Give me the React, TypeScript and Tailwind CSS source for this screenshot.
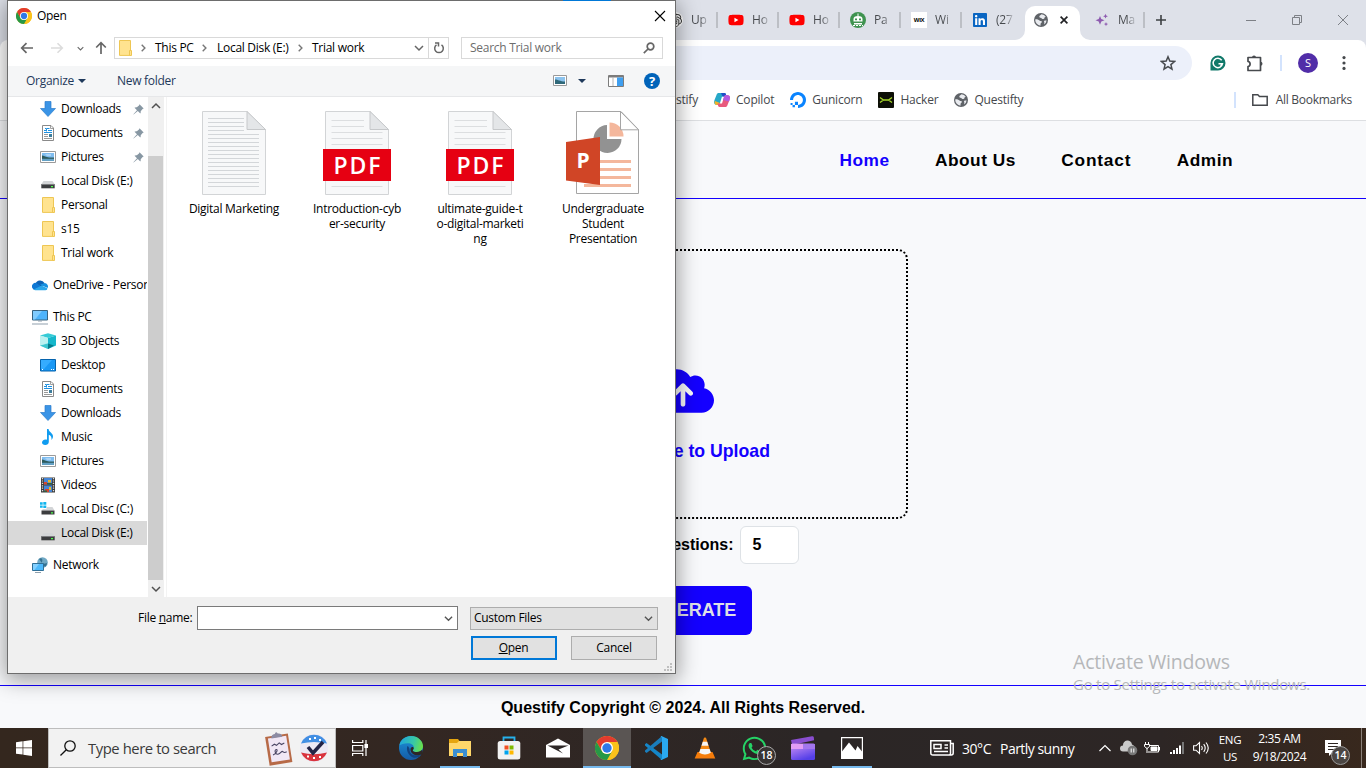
import React from "react";
import { FaWhatsapp, FaLinkedin, FaYoutube } from "react-icons/fa";
import { FaCloudArrowUp } from "react-icons/fa6";
import { SiOpenai, SiDigitalocean } from "react-icons/si";

type IconProps = { className?: string };

const Chrome = ({ className = "" }: IconProps) => (
  <svg viewBox="0 0 48 48" className={className}>
    <circle cx="24" cy="24" r="24" fill="#fbc21a" />
    <path d="M24 12H44.8A24 24 0 0 1 24 48L34.4 30Z" fill="#fbc21a" />
    <path d="M3.2 12 13.6 30 24 24V12H44.8A24 24 0 0 0 3.2 12Z" fill="#e33b2e" />
    <path d="M3.2 12 13.6 30A12 12 0 0 0 34.4 30L24 48A24 24 0 0 1 3.2 12Z" fill="#279847" />
    <circle cx="24" cy="24" r="12" fill="#fff" />
    <circle cx="24" cy="24" r="9.4" fill="#2f78e8" />
  </svg>
);

const Globe = ({ className = "" }: IconProps) => (
  <svg viewBox="0 0 16 16" className={className}>
    <circle cx="8" cy="8" r="8" fill="#5f6368" />
    <path
      d="M1.6 7.2C3 7 5 7.400 6.300 8.600 7.100 9.500 8.800 8.800 9.100 10.100 9.300 11.300 7.500 11.200 7.500 12.600L7.400 14.500A6.600 6.600 0 0 1 1.400 8ZM8.600 1.500C7.400 2.700 5.800 3 6.100 4.600 6.400 5.900 8 5.300 8.900 6.300 9.800 7.300 11.600 7 12 5.600 12.200 4.600 13.200 4.700 13.600 4.700A6.500 6.500 0 0 0 8.600 1.500ZM14.400 8.600C13.400 8.500 12.400 8.200 11.600 9.100 10.900 10 12.200 10.500 11.800 11.500L11.400 13.200A6.500 6.500 0 0 0 14.400 8.600Z"
      fill="#e9ebef"
    />
  </svg>
);

const FolderIcon = () => (
  <svg viewBox="0 0 16 16" className="h-4 w-4">
    <path d="M2.500.5h11v14.900h-11z" fill="#ffe38f" stroke="#eec653" />
    <path d="M12.500 10.500h2v5h-2z" fill="#ffe38f" stroke="#eec653" />
  </svg>
);

const DownloadIcon = () => (
  <svg viewBox="0 0 16 16" className="h-4 w-4">
    <path d="M5 .5h6v7h4.500L8 15.500.5 7.500H5z" fill="#3a94e6" stroke="#2b7ccb" strokeWidth=".7" />
  </svg>
);

const DocIcon = () => (
  <svg viewBox="0 0 16 16" className="h-4 w-4">
    <path d="M2.500.5h8.500l2.500 2.500v12.500h-11z" fill="#fff" stroke="#8a8a8a" />
    <path d="M10.500.5v3h3" fill="none" stroke="#8a8a8a" strokeWidth=".8" />
    <path d="M4 5.500h2M7 3.500h2.500M8 5.500h4M4 7.500h8" stroke="#1e90e0" />
    <path d="M5 3.500h1.500v3" stroke="#1e90e0" fill="none" />
    <path d="M4 9.500h4M4 11.500h4M4 13.500h8" stroke="#999" />
    <path d="M9 9h3v3H9z" fill="#3d7d9c" />
  </svg>
);

const PictureIcon = () => (
  <svg viewBox="0 0 16 16" className="h-4 w-4">
    <path d="M.5 2.500h15v11H.5z" fill="#fff" stroke="#9a9a9a" />
    <path d="M2 4h12v8H2z" fill="#7fbdf0" />
    <path d="M2 6.500c2 0 3 1.200 6 1.700s4 .3 6 .3V10H2z" fill="#2d5b5d" />
    <path d="M2 9.800h12V12H2z" fill="#63a0c4" />
    <path d="M5 5.500h6v1H7z" fill="#d6ecfb" />
  </svg>
);

const DriveIcon = () => (
  <svg viewBox="0 0 16 16" className="h-4 w-4">
    <path d="M3.500 8h9l2 3h-13z" fill="#d3d5d7" />
    <path d="M1.300 11h13.400v4.300H1.300z" fill="#3c3d3f" />
    <path d="M1.300 11h13.400v.8H1.300z" fill="#8d8f91" />
    <path d="M11 13h2v1.200h-2z" fill="#4dff4d" />
  </svg>
);

const SystemDriveIcon = () => (
  <svg viewBox="0 0 16 16" className="h-4 w-4">
    <path d="M0 1.300h2.700v2.400H0zM3.300 1h3v2.700h-3zM0 4.400h2.700v2.400H0zM3.300 4.400h3V7h-3z" fill="#12b5ee" />
    <path d="M6.500 6h6l2 3.600h-13L3 8.100h3.500z" fill="#d3d5d7" />
    <path d="M1.500 9.500h13v4H1.500z" fill="#3c3d3f" />
    <path d="M11 11.300h2v1.200h-2z" fill="#4dff4d" />
  </svg>
);

const OneDriveIcon = () => (
  <svg viewBox="0 0 16 16" className="h-4 w-4">
    <path d="M3.400 6.700A5 5 0 0 1 12.500 6l-3 4z" fill="#0d62b5" />
    <path d="M.3 11A3.500 3.500 0 0 1 5 6.300l4 3.500-7 3.200z" fill="#0f78d4" />
    <path d="M8 7.800 12.700 6A3.600 3.600 0 0 1 15.700 11z" fill="#1690e0" />
    <path d="M1.800 12.600 9.500 8.500l5.800 2.800c.4 1-.7 2-1.800 2H3.300c-.8 0-1.200-.4-1.500-.7z" fill="#2aa6ea" />
  </svg>
);

const PcIcon = () => (
  <svg viewBox="0 0 16 16" className="h-4 w-4">
    <path d="M.5 1.500h15v9.500H.5z" fill="#4db3fb" stroke="#37627f" />
    <path d="M1 2h9l-7 8.500H1z" fill="#80ccff" />
    <path d="M6 11.600h4v1H6zM0 14.500h16v1H0z" fill="#8fa0ad" />
  </svg>
);

const ObjectsIcon = () => (
  <svg viewBox="0 0 16 16" className="h-4 w-4">
    <path d="M0 2.500 8 .3l8 2.200-8 2.500z" fill="#35cbd6" />
    <path d="M0 2.500 8 5v11L0 12.500z" fill="#8fe8ea" />
    <path d="M16 2.500 8 5v11l8-3.500z" fill="#16b7cb" />
    <path d="M8 10.500 14 12.500 8 16z" fill="#077b8a" />
    <path d="m0 12.500 8-2V16z" fill="#3cc6cf" />
    <path d="M0 2.500 8 5v5l-8 2.500z" fill="#c6f3f1" opacity=".8" />
  </svg>
);

const DesktopIcon = () => (
  <svg viewBox="0 0 16 16" className="h-4 w-4">
    <path d="M.5 2.500h15v11.500H.5z" fill="#1998f5" stroke="#0563ad" />
    <path d="M1 3h11l-8 9H1z" fill="#35acff" />
    <path d="M2 12.500h1M11 12.500h1M13 12.500h1" stroke="#fff" />
  </svg>
);

const MusicIcon = () => (
  <svg viewBox="0 0 16 16" className="h-4 w-4">
    <path d="M7 0h1.600c0 3 4.600 4 4.400 7.500 0 1.500-.8 2.700-1.600 3.400.5-2.300-.4-4.300-2.600-5.200V13c0 1.800-1.700 3-3.600 3S2 14.900 2 13.500 3.400 10.500 5.500 10.500c.6 0 1.100.1 1.500.3z" fill="#109cf0" />
  </svg>
);

const VideoIcon = () => (
  <svg viewBox="0 0 16 16" className="h-4 w-4">
    <path d="M1 .5h14v15H1z" fill="#3c3c3c" />
    <path d="M2.500 1v14M13.500 1v14" stroke="#ddd" strokeWidth="1.300" strokeDasharray="1.200 1.200" />
    <path d="M4 1h8v6.500H4zM4 8.500h8V15H4z" fill="#4586d8" />
    <path d="M4 5h3v2.500H4zM5 12h4v3H5z" fill="#d6452d" />
    <path d="M8 3h3v2.500H8zM9 10h2v3H9z" fill="#e8b92e" />
    <path d="M7 6h5v1.500H7zM4 13.500h3V15H4z" fill="#31603f" />
  </svg>
);

const NetworkIcon = () => (
  <svg viewBox="0 0 16 16" className="h-4 w-4">
    <circle cx="10.500" cy="5.500" r="5.300" fill="#6fa8c4" />
    <path d="M7 2c3-2 4 1 3 3s2 2 5 1a5 5 0 0 1-2 4z" fill="#35708f" />
    <path d="M.5 6.500h11v7H.5z" fill="#4db9fb" stroke="#2f6f97" />
    <path d="M1 7h6l-4.500 6H1z" fill="#83d0ff" />
    <path d="M3 15.500h6" stroke="#8fa0ad" />
  </svg>
);

const Pin = () => (
  <svg viewBox="0 0 11 11" className="h-[11px] w-[11px]">
    <path d="M6.500.3 10.700 4.500 9.600 5 7.700 7.200c.2 1 0 1.700-.4 2.300L4.800 7 .6 10.500.4 10.300 4 6.200 1.500 3.700c.6-.4 1.300-.6 2.300-.4L6 1.400z" fill="#8797a3" />
  </svg>
);

type Row = { icon: React.ReactNode; label: string; root?: boolean; pin?: boolean; selected?: boolean };

const rows: Row[] = [
  { icon: <DownloadIcon />, label: "Downloads", pin: true },
  { icon: <DocIcon />, label: "Documents", pin: true },
  { icon: <PictureIcon />, label: "Pictures", pin: true },
  { icon: <DriveIcon />, label: "Local Disk (E:)" },
  { icon: <FolderIcon />, label: "Personal" },
  { icon: <FolderIcon />, label: "s15" },
  { icon: <FolderIcon />, label: "Trial work" },
  { icon: <OneDriveIcon />, label: "OneDrive - Person", root: true },
  { icon: <PcIcon />, label: "This PC", root: true },
  { icon: <ObjectsIcon />, label: "3D Objects" },
  { icon: <DesktopIcon />, label: "Desktop" },
  { icon: <DocIcon />, label: "Documents" },
  { icon: <DownloadIcon />, label: "Downloads" },
  { icon: <MusicIcon />, label: "Music" },
  { icon: <PictureIcon />, label: "Pictures" },
  { icon: <VideoIcon />, label: "Videos" },
  { icon: <SystemDriveIcon />, label: "Local Disc (C:)" },
  { icon: <DriveIcon />, label: "Local Disk (E:)", selected: true },
  { icon: <NetworkIcon />, label: "Network", root: true },
];

const Sheet = ({ dense = false }: { dense?: boolean }) => (
  <>
    <path d="M.5.5h44.500L63.500 18.500v65H.5z" fill="#f7f8f9" stroke="#d2d4d6" />
    <path d="M45 .5v18h18.500z" fill="#e4e6e8" stroke="#c6c8ca" strokeLinejoin="round" />
    {dense ? (
      <>
        {[7, 11, 15, 19].map((y) => (
          <path key={y} d={`M6 ${y + 0.5}h36`} stroke="#d3d6d9" />
        ))}
        {Array.from({ length: 14 }, (_, i) => (
          <path key={i} d={`M6 ${23.5 + i * 4}h51`} stroke="#d3d6d9" />
        ))}
      </>
    ) : (
      <path d="M6.500 9.500H39M6.500 15.500H39M6.500 21.500h51M6.500 27.500h51M6.500 33.500h51M6.500 75.500h51" stroke="#dcdee0" />
    )}
  </>
);

const TextFile = () => (
  <svg viewBox="0 0 64 84" className="h-[84px] w-[64px]">
    <Sheet dense />
  </svg>
);

const PdfFile = () => (
  <div className="relative h-[84px] w-[68px]">
    <svg viewBox="0 0 64 84" className="ml-[2px] h-[84px] w-[64px]">
      <Sheet />
    </svg>
    <div className="absolute left-0 top-[38px] flex h-[32px] w-[68px] items-center justify-center bg-[#e60012] pl-[3px] font-['Open_Sans'] text-[23px] font-semibold leading-none tracking-[2px] text-white">
      PDF
    </div>
  </div>
);

const PptFile = () => (
  <div className="relative h-[84px] w-[74px]">
    <svg viewBox="0 0 74 84" className="h-[84px] w-[74px]">
      <path d="M10.500.5H55L72.500 18.500v64h-62z" fill="#fff" stroke="#a5a5a5" />
      <path d="M41 14a14 14 0 1 0 14.500 14H41z" fill="#929292" />
      <path d="M43.500 11.500A14 14 0 0 1 57.500 25.500h-14z" fill="#f4b79c" />
      <path d="M54.500.5v18.300h18z" fill="#fff" fillOpacity=".55" stroke="#a5a5a5" />
      <path d="M32 50.500h33M32 58.500h33M32 66.500h33M18 74.500h47" stroke="#f4b79c" strokeWidth="3" />
      <path d="M0 31 34 26v48L0 69.500z" fill="#d04526" />
    </svg>
    <span className="absolute left-[11px] top-[37px] font-['Open_Sans'] text-[21px] font-bold leading-[24px] text-white">P</span>
  </div>
);

const files = [
  { icon: <TextFile />, lines: ["Digital Marketing"] },
  { icon: <PdfFile />, lines: ["Introduction-cyb", "er-security"] },
  { icon: <PdfFile />, lines: ["ultimate-guide-t", "o-digital-marketi", "ng"] },
  { icon: <PptFile />, lines: ["Undergraduate", "Student", "Presentation"] },
];

const Chevron = ({ className = "" }: IconProps) => (
  <svg viewBox="0 0 10 10" className={className} fill="none" stroke="currentColor" strokeWidth="1.500">
    <path d="m1 3 4 4 4-4" />
  </svg>
);

const Crumb = () => (
  <svg viewBox="0 0 5 8" className="h-2 w-[5px]" fill="none" stroke="#777" strokeWidth="1.400">
    <path d="m.7.8 3.200 3.200L.7 7.200" />
  </svg>
);

function OpenDialog() {
  return (
    <div className="absolute left-[7px] top-0 flex h-[674px] w-[669px] flex-col border border-[#6d6d6d] bg-white font-['Open_Sans',sans-serif] text-[12px] tracking-[-0.280px] text-black shadow-[0_4px_20px_2px_rgba(0,0,0,0.38)]">
      <div className="absolute -top-px left-[555px] h-px w-[48px] bg-[#0078d7]" />
      <div className="flex h-[29px] shrink-0 items-center pl-2 pr-[9px]">
        <Chrome className="h-4 w-4" />
        <span className="ml-[5px] flex-1">Open</span>
        <svg viewBox="0 0 12 12" className="h-3 w-3" stroke="#000" strokeWidth="1.100">
          <path d="m1 1 10 10M11 1 1 11" />
        </svg>
      </div>
      <div className="flex h-[36px] shrink-0 items-center pl-3 text-[#666]">
        <svg viewBox="0 0 14 12" className="h-3 w-[14px]" fill="none" stroke="#666" strokeWidth="1.700">
          <path d="M13 6H2M6.500 1.200 1.700 6l4.800 4.800" />
        </svg>
        <svg viewBox="0 0 14 12" className="ml-4 h-3 w-[14px]" fill="none" stroke="#dcdcdc" strokeWidth="1.600">
          <path d="M1 6h11M7.500 1.200 12.300 6l-4.800 4.800" />
        </svg>
        <Chevron className="ml-[13px] h-[7px] w-[7px]" />
        <svg viewBox="0 0 12 14" className="ml-[11px] h-[14px] w-3" fill="none" stroke="#666" strokeWidth="1.700">
          <path d="M6 13V2M1.200 6.500 6 1.700l4.800 4.800" />
        </svg>
        <div className="ml-[7px] flex h-[22px] w-[335px] items-center border border-[#d9d9d9] pl-[2px] text-black">
          <FolderIcon />
          <span className="ml-2"><Crumb /></span>
          <span className="ml-[9px] w-[40px] whitespace-nowrap">This PC</span>
          <span className="ml-[7px]"><Crumb /></span>
          <span className="ml-[10px] w-[73px] whitespace-nowrap">Local Disk (E:)</span>
          <span className="ml-[8px]"><Crumb /></span>
          <span className="ml-[9px] flex-1 whitespace-nowrap">Trial work</span>
          <Chevron className="mr-1 h-[10px] w-[10px] text-[#666]" />
          <div className="flex h-full w-[20px] items-center justify-center border-l border-[#d9d9d9]">
            <svg viewBox="0 0 12 12" className="h-3 w-3" fill="none" stroke="#666" strokeWidth="1.500">
              <path d="M8.500 2.800A4.300 4.300 0 1 1 3.500 2.800" />
              <path d="M2 1h3.500v3.500" />
            </svg>
          </div>
        </div>
        <div className="ml-3 flex h-[22px] w-[202px] items-center border border-[#d9d9d9] pl-2 pr-[7px]">
          <span className="flex-1 text-[#6d6d6d]">Search Trial work</span>
          <svg viewBox="0 0 12 12" className="h-3 w-3" fill="none" stroke="#666" strokeWidth="1.700">
            <circle cx="7.500" cy="4.500" r="3.300" />
            <path d="M5 7 .8 11.200" />
          </svg>
        </div>
      </div>
      <div className="flex h-[31px] shrink-0 items-center border-b border-[#e6e7e9] bg-[#f5f6f7] pl-[18px] pr-[15px] text-[#1e395b]">
        <span className="w-[48px]">Organize</span>
        <span className="ml-1 border-x-4 border-t-4 border-x-transparent border-t-[#1e395b]" />
        <span className="ml-[31px] flex-1">New folder</span>
        <svg viewBox="0 0 14 12" className="h-3 w-[14px]">
          <path d="M.5.5h13v10H.5z" fill="#fff" stroke="#999" />
          <path d="M2 2h10v7H2z" fill="#8cc3ee" />
          <path d="M2 4.500c3 0 5 2 10 2V9H2z" fill="#2f6879" />
        </svg>
        <span className="ml-[11px] border-x-4 border-t-4 border-x-transparent border-t-[#1e395b]" />
        <svg viewBox="0 0 16 12" className="ml-[22px] h-3 w-4">
          <path d="M.5.500h15v11H.5z" fill="#fff" stroke="#7c7c7c" />
          <path d="M.5 1h15v1.500H.5z" fill="#7c7c7c" />
          <path d="M5 2v9" stroke="#b5b5b5" />
          <path d="M9 2.500h6v8.500H9z" fill="#3f9ff0" />
        </svg>
        <span className="ml-5 flex h-4 w-4 items-center justify-center rounded-full bg-[#0063b9] text-[13px] font-bold leading-none text-white">?</span>
      </div>
      <div className="flex min-h-0 flex-1">
        <div className="flex w-[139px] flex-col overflow-hidden">
          {rows.map((r, i) => (
            <div
              key={i}
              className={`flex h-6 shrink-0 items-center whitespace-nowrap ${r.root ? "mt-2 pl-6" : "pl-8"} ${r.selected ? "bg-[#d9d9d9]" : ""}`}
            >
              <span className="shrink-0">{r.icon}</span>
              <span className="ml-[5px] flex-1">{r.label}</span>
              {r.pin && <span className="mr-[3px]"><Pin /></span>}
            </div>
          ))}
        </div>
        <div className="ml-px flex w-[16px] flex-col items-center bg-[#f0f0f0] text-[#505050]">
          <Chevron className="mr-px mt-1 h-[10px] w-[10px] rotate-180" />
          <div className="mt-[45px] h-[424px] w-[15px] self-start bg-[#cdcdcd]" />
          <Chevron className="mr-px mt-1 h-[10px] w-[10px]" />
        </div>
        <div className="ml-[2px] flex flex-1 border-l border-[#f3f3f3] pl-[5px] pt-[14px]">
          {files.map((f) => (
            <div key={f.lines[0]} className="flex w-[123px] flex-col items-center">
              {f.icon}
              <div className="mt-[6px] pl-px text-center leading-[15px]">
                {f.lines.map((l) => (
                  <div key={l}>{l}</div>
                ))}
              </div>
            </div>
          ))}
        </div>
      </div>
      <div className="relative h-[76px] shrink-0 bg-[#f0f0f0] pt-[9px]">
        <div className="flex items-center">
          <span className="ml-[130px] w-[54px] whitespace-nowrap">File <u>n</u>ame:</span>
          <div className="ml-[5px] flex h-6 w-[261px] items-center justify-end border border-[#7a7a7a] bg-white pr-1">
            <Chevron className="h-[9px] w-[9px] text-[#555]" />
          </div>
          <div className="ml-3 flex h-[23px] w-[188px] items-center justify-between border border-[#adadad] bg-[#e1e1e1] pl-[3px] pr-1">
            <span>Custom Files</span>
            <Chevron className="h-[9px] w-[9px] text-[#555]" />
          </div>
        </div>
        <div className="ml-[463px] mt-[6px] flex gap-[14px]">
          <button className="h-6 w-[86px] border-2 border-[#0078d7] bg-[#e1e1e1] pr-px tracking-[-0.280px]"><u>O</u>pen</button>
          <button className="h-6 w-[86px] border border-[#adadad] bg-[#e1e1e1] tracking-[-0.280px]">Cancel</button>
        </div>
        <svg viewBox="0 0 8 8" className="absolute bottom-[2px] right-[3px] h-2 w-2" fill="#bfbfbf">
          <path d="M6 0h2v2H6zM3 3h2v2H3zM6 3h2v2H6zM0 6h2v2H0zM3 6h2v2H3zM6 6h2v2H6z" />
        </svg>
      </div>
    </div>
  );
}

const Tab = ({ icon, label, sep = true }: { icon: React.ReactNode; label: string; sep?: boolean }) => (
  <div className="flex h-4 w-[61px] shrink-0 items-center pl-[10px]">
    <span className="flex h-4 w-4 shrink-0 items-center justify-center">{icon}</span>
    <span className="ml-2 w-[17px] whitespace-nowrap bg-gradient-to-r from-[#45484c] from-50% to-[#45484c]/20 bg-clip-text text-transparent">{label}</span>
    {sep && <span className="ml-[8px] h-4 w-[1.500px] bg-[#bcbfc5]" />}
  </div>
);

const YouTube = () => <FaYoutube className="h-[18px] w-[18px] text-[#f00] [background:linear-gradient(#fff,#fff)_center/6px_6px_no-repeat]" />;

const Bookmark = ({ icon, label }: { icon: React.ReactNode; label: string }) => (
  <div className="flex items-center gap-[6px]">
    {icon}
    <span>{label}</span>
  </div>
);

function BrowserChrome() {
  return (
    <div className="flex h-[121px] shrink-0 flex-col border-b border-[#dddfe2] bg-[#dee1e9] font-['Open_Sans',sans-serif] text-[12px] tracking-[-0.200px] text-[#45484c]">
      <div className="flex h-10 items-center pl-[657px]">
        <Tab icon={<span className="rounded-full bg-white p-px"><SiOpenai className="h-[14px] w-[14px] text-[#333]" /></span>} label="Up" />
        <Tab icon={<YouTube />} label="Ho" />
        <Tab icon={<YouTube />} label="Ho" />
        <Tab
          icon={
            <svg viewBox="0 0 16 16" className="h-4 w-4">
              <circle cx="8" cy="8" r="8" fill="#3f9350" />
              <path d="M7.500 1.500h1V4h-1zM3.500 9.500V7Q3.500 4 8 4t4.500 3v2.500zM4 11h8v1.500H4z" fill="#fff" />
              <path d="M5 6.500h2v1.700H5zM9 6.500h2v1.700H9z" fill="#3f9350" />
              <path d="M3 13.500h10" stroke="#fff" strokeDasharray="2 1" />
            </svg>
          }
          label="Pa"
        />
        <Tab icon={<span className="flex h-4 w-4 items-center justify-center bg-white font-['Liberation_Sans'] text-[6px] font-bold tracking-[-0.300px] text-black">WIX</span>} label="Wi" />
        <Tab icon={<span className="flex h-[14px] w-[14px] items-center justify-center bg-white"><FaLinkedin className="h-4 w-4 shrink-0 text-[#0a66c2]" /></span>} label="(27" sep={false} />
        <div className="relative ml-[2px] mr-[4px] flex h-[34px] w-[55px] shrink-0 items-center self-end rounded-t-[10px] bg-white pl-[9px]">
          <svg viewBox="0 0 10 10" className="absolute -left-[10px] bottom-0 h-[10px] w-[10px]"><path d="M10 0v10H0A10 10 0 0 0 10 0z" fill="#fff" /></svg>
          <svg viewBox="0 0 10 10" className="absolute -right-[10px] bottom-0 h-[10px] w-[10px]"><path d="M0 0v10h10A10 10 0 0 1 0 0z" fill="#fff" /></svg>
          <Globe className="mb-[6px] h-[14px] w-[14px]" />
          <svg viewBox="0 0 8 8" className="mb-[6px] ml-[12px] h-2 w-2" stroke="#202124" strokeWidth="1.700"><path d="m.6.6 6.800 6.800M7.400.6.6 7.400" /></svg>
        </div>
        <Tab
          icon={
            <svg viewBox="0 0 14 14" className="h-[14px] w-[14px]" fill="#8e5bb0">
              <path d="m5 3 1.300 3L9.500 7.200 6.300 8.500 5 11.700 3.700 8.500.5 7.200 3.700 6z" />
              <path d="m10.500.8.7 1.700 1.700.7-1.700.7-.7 1.700-.7-1.700-1.700-.7 1.700-.7zM11 9l.6 1.500 1.500.6-1.500.6L11 13.200l-.6-1.500-1.500-.6 1.500-.6z" />
            </svg>
          }
          label="Ma"
        />
        <svg viewBox="0 0 10 10" className="ml-[11px] h-[10px] w-[10px]" stroke="#3c4043" strokeWidth="1.600"><path d="M5 0v10M0 5h10" /></svg>
        <svg viewBox="0 0 10 10" className="ml-[80px] h-[10px] w-[10px]" stroke="#7d8086"><path d="M0 5.500h10" /></svg>
        <svg viewBox="0 0 10 10" className="ml-[36px] h-[10px] w-[10px]" fill="none" stroke="#7d8086"><path d="M.5 2.500h7v7h-7zM2.500 2.500v-2h7v7h-2" /></svg>
        <svg viewBox="0 0 10 10" className="ml-[36px] h-[10px] w-[10px]" stroke="#7d8086"><path d="m0 0 10 10M10 0 0 10" /></svg>
      </div>
      <div className="flex flex-1 flex-col rounded-t-[8px] bg-white">
        <div className="flex h-[46px] items-center">
          <div className="ml-[120px] flex h-[34px] w-[1072px] items-center justify-end rounded-full bg-[#ecf0fa] pr-[16px]">
            <svg viewBox="0 0 16 16" className="h-4 w-4" fill="none" stroke="#474a4e" strokeWidth="1.500" strokeLinejoin="miter">
              <path d="m8 1.800 1.800 4.300 4.700.4-3.600 3.100 1.100 4.600L8 11.700l-4 2.500 1.100-4.600L1.500 6.500l4.700-.4z" />
            </svg>
          </div>
          <svg viewBox="0 0 16 16" className="ml-[18px] h-4 w-4">
            <path d="M8 .5A7.500 7.500 0 1 1 8 15.500H.5V8A7.500 7.500 0 0 1 8 .5z" fill="#11796a" />
            <path d="M11.700 5.200A4.700 4.700 0 1 0 12.500 8.700H8.500M12.300 8.500l-1.600 2.700" fill="none" stroke="#fff" strokeWidth="1.500" />
          </svg>
          <svg viewBox="0 0 18 18" className="ml-[20px] h-[18px] w-[18px]">
            <path d="M2 3.500h12.500v13H2v-4c2.800-.3 2.800-4.700 0-5z" fill="none" stroke="#474a4e" strokeWidth="1.700" strokeLinejoin="round" />
            <path d="M6 3.500a2 2 0 0 1 4 0zM14.500 7.800a2 2 0 0 1 0 4z" fill="#474a4e" />
          </svg>
          <span className="ml-[16px] h-4 w-[2px] bg-[#d3e3fd]" />
          <span className="ml-[16px] flex h-5 w-5 items-center justify-center rounded-full bg-[#512da8] text-[11px] text-white">S</span>
          <svg viewBox="0 0 4 16" className="ml-[24px] h-4 w-1" fill="#45484c">
            <circle cx="2" cy="2.600" r="1.600" /><circle cx="2" cy="8" r="1.600" /><circle cx="2" cy="13.400" r="1.600" />
          </svg>
        </div>
        <div className="flex h-[28px] items-center pl-[661px] pr-[14px]">
          <span className="w-[37px] text-right">stify</span>
          <div className="ml-[16px] flex flex-1 items-center gap-[16px]">
            <Bookmark
              icon={
                <svg viewBox="0 0 16 16" className="h-4 w-4">
                  <path d="M5 1h5.500C12 1 12 3 12.500 4.500H8L6 11c-.5 1.500-1 2-2.500 2-3.500 0-4-2-3-5L2.500 3C3 1.500 3.500 1 5 1z" fill="#26a8c8" />
                  <path d="M7 1h3.500c1.500 0 1.500 2 2 3.500H8.500z" fill="#1f50c8" />
                  <path d="m1 9 5 2c-.5 1.500-1 2-2.500 2C.5 13 .2 11 1 9z" fill="#f0b52a" />
                  <path d="M11 15H5.500C4 15 4 13 3.500 11.500H8L10 5c.5-1.500 1-2 2.500-2 3.500 0 4 2 3 5L13.500 13c-.5 1.500-1 2-2.500 2z" fill="#e85a7d" />
                  <path d="M10 5c.5-1.500 1-2 2.500-2 3.500 0 4 2 3 5l-.5 1.500L9 8z" fill="#b35be0" />
                </svg>
              }
              label="Copilot"
            />
            <Bookmark icon={<SiDigitalocean className="h-4 w-4 text-[#0a84ff]" />} label="Gunicorn" />
            <Bookmark
              icon={
                <svg viewBox="0 0 16 16" className="h-4 w-4">
                  <rect width="16" height="16" rx="1" fill="#0c0f06" />
                  <path d="M2 5.500 5.500 8h5L14 5.500M2 10.500 5.500 8h5l3.500 2.500" fill="none" stroke="#a5d62a" strokeWidth="1.300" />
                </svg>
              }
              label="Hacker"
            />
            <Bookmark icon={<Globe className="h-[14px] w-[14px]" />} label="Questifty" />
          </div>
          <span className="h-4 w-[2px] bg-[#d3e3fd]" />
          <svg viewBox="0 0 16 12" className="ml-[16px] h-3 w-4" fill="none" stroke="#45484c" strokeWidth="1.500"><path d="M.8.8h5l1.700 1.700h7.700v8.700H.8z" /></svg>
          <span className="ml-[8px] tracking-[-0.280px]">All Bookmarks</span>
        </div>
      </div>
    </div>
  );
}

function WebPage() {
  return (
    <div className="flex h-[607px] shrink-0 flex-col bg-[#f8f9fb] font-['Liberation_Sans',Arial,sans-serif] font-bold text-black">
      <nav className="flex h-[78px] shrink-0 items-center justify-end gap-[45.500px] border-b border-[#1400ff] pr-[133px] pt-[2px] text-[17.300px] tracking-[0.500px]">
        <a className="text-[#1400ff]">Home</a>
        <a>About Us</a>
        <a className="tracking-[0.800px]">Contact</a>
        <a>Admin</a>
      </nav>
      <main className="flex flex-1 flex-col items-center">
        <div className="mt-[50px] flex h-[270px] w-[450px] flex-col items-center rounded-[10px] border-2 border-dotted border-black text-[#1400ff]">
          <FaCloudArrowUp className="mt-[115px] h-[50px] w-[62px]" />
          <span className="mt-[23px] text-[17.700px] leading-[24px]">Select File to Upload</span>
        </div>
        <div className="mt-[7px] flex h-[38px] items-center gap-[6px] pr-[2px] text-[16px]">
          <span>Number of Questions:</span>
          <div className="flex h-[38px] w-[59px] items-center rounded-[6px] border border-[#dee2e6] bg-white pl-3">5</div>
        </div>
        <button className="mt-[22px] h-[49px] w-[138px] rounded-[6px] bg-[#1400ff] pl-[8px] text-[18px] text-[#dfdfe6]">GENERATE</button>
      </main>
      <footer className="flex h-[43px] shrink-0 items-center justify-center border-t border-[#1400ff] pt-[2px] text-[16px]">
        Questify Copyright © 2024. All Rights Reserved.
      </footer>
    </div>
  );
}

const Cell = ({ children, active = false, running = false }: { children: React.ReactNode; active?: boolean; running?: boolean }) => (
  <div className={`relative mr-px flex h-10 w-12 shrink-0 items-center justify-center ${active ? "bg-[#5a5553]" : ""}`}>
    {children}
    {(active || running) && <span className={`absolute bottom-0 h-[2px] bg-[#76b9ed] ${active ? "w-12" : "w-10"}`} />}
  </div>
);

function Taskbar() {
  return (
    <div className="flex h-10 shrink-0 items-center bg-[linear-gradient(90deg,#34271e,#332722_30%,#2b2626_60%,#2d2625_85%,#38281d)] font-['Open_Sans',sans-serif] text-white">
      <div className="flex w-12 items-center justify-center">
        <svg viewBox="0 0 16 16" className="h-4 w-4" fill="#fff"><path d="M0 2.200 6.600 1.300v6.300H0zM7.300 1.200 16 0v7.600H7.300zM0 8.300h6.600v6.300L0 13.700zM7.300 8.300H16V16l-8.700-1.300z" /></svg>
      </div>
      <div className="flex h-10 w-72 items-center border border-[#bdbdbd] bg-[#f2f2f2] pl-[11px] pr-[6px] text-[#3a3a3a]">
        <svg viewBox="0 0 16 16" className="h-4 w-4" fill="none" stroke="#111" strokeWidth="1.300"><circle cx="10" cy="6" r="5.200" /><path d="M6.300 9.700.5 15.500" /></svg>
        <span className="ml-[12px] flex-1 whitespace-nowrap text-[14.800px] tracking-[-0.420px]">Type here to search</span>
        <svg viewBox="0 0 30 36" className="h-9 w-[30px]">
          <g transform="rotate(-9 15 18)">
            <path d="M3 5h23v29H3z" fill="#b76a47" />
            <path d="M5.500 7h18.500v24H5.500z" fill="#f1e7f5" />
            <path d="M9 7.500q0-4 4-4 1.500-3 3 0 4 0 4 4z" fill="#8c8ba3" />
            <path d="m8 15 3-1.500 2 1.500 3-2 2 2 3-1M8 24c4-1 6-5 4-5s-2 5 1 5 4-3 5-2 1 2 4 1" fill="none" stroke="#4a4563" strokeWidth="1.100" />
          </g>
        </svg>
        <svg viewBox="0 0 28 28" className="ml-[6px] mr-px h-7 w-7">
          <circle cx="14" cy="14" r="14" fill="#ece9f4" />
          <path d="M1 9.500a14 14 0 0 1 26 0Q14 6.500 1 9.500z" fill="#428fe3" />
          <path d="M1 18.500a14 14 0 0 0 26 0Q14 22 1 18.500z" fill="#d9343e" />
          <path d="M9 4h2v2H9zM14 3h2v2h-2zM19 5h2v2h-2zM7 21.500h2v2H7zM13 23h2v2h-2zM19 22h2v2h-2z" fill="#fff" />
          <path d="m8 13 5 6 10-11" fill="none" stroke="#232446" strokeWidth="3.500" />
        </svg>
      </div>
      <Cell>
        <svg viewBox="0 0 16 16" className="h-4 w-4" fill="none" stroke="#fff" strokeWidth="1.200"><path d="M.6 0v2.500h10.200V0M.6 5.500h10.200v5.500H.6zM.6 16v-2.500h10.200V16M14 0v4M14 8v8" /><path d="M13 4.500h2.500v3H13z" fill="#fff" /></svg>
      </Cell>
      <span className="w-[2px]" />
      <Cell>
        <svg viewBox="0 0 24 24" className="h-6 w-6">
          <defs>
            <linearGradient id="edgeTop" x1="0" y1=".3" x2="1" y2=".5"><stop stopColor="#1fa5df" /><stop offset=".6" stopColor="#38c8a6" /><stop offset="1" stopColor="#69e04a" /></linearGradient>
            <linearGradient id="edgeBase" x1="0" y1="0" x2="0" y2="1"><stop stopColor="#1b93da" /><stop offset="1" stopColor="#155ba5" /></linearGradient>
          </defs>
          <circle cx="12" cy="12" r="12" fill="url(#edgeBase)" />
          <path d="M.3 9.500C1.500 3.500 6.500 0 12 0c7 0 12 5 12 10 0 4-3 6-6.200 6-2.300 0-4-.7-4-1.500 0-.7 1-1.300 1-3 0-2.500-2.500-4.300-6-4.300-4 0-7 1-8.500 2.300z" fill="url(#edgeTop)" />
          <path d="M8.500 10C7 13 8.500 19 14 21.500c3 1 6.500-.5 8.500-3-3 1.500-12 2-12-5 0-1.500-1-3-2-3.500z" fill="#12437f" />
          <path d="M13.800 14.500c0 1 2 1.500 4 1.500 2.700 0 4-1 5.500-2.200L24 18l-1.500.5c-4 1.800-11 .5-11-5 0-2 1.500-3 3-2 .8 1.500-.7 2-.7 3z" fill="#2e2726" />
        </svg>
      </Cell>
      <Cell running>
        <svg viewBox="0 0 22 20" className="h-5 w-[22px]"><path d="M0 1h9l1.500 2H22v4H0z" fill="#e5a50f" /><path d="M0 5h8l2-2h12v15H0z" fill="#ffd76a" /><path d="M4 11h14v8h-4v-4H8v4H4z" fill="#3b8fd1" /></svg>
      </Cell>
      <Cell>
        <svg viewBox="0 0 24 24" className="h-6 w-6"><path d="M6.500 6V1.500h11V6" fill="none" stroke="#26b1ec" strokeWidth="1.800" /><rect x=".7" y="5" width="22.600" height="18.500" rx="2.500" fill="#f2f2f2" /><path d="M7.500 9.500h4v4h-4z" fill="#f25022" /><path d="M12.500 9.500h4v4h-4z" fill="#7fba00" /><path d="M7.500 14.500h4v4h-4z" fill="#00a4ef" /><path d="M12.500 14.500h4v4h-4z" fill="#ffb900" /></svg>
      </Cell>
      <Cell>
        <svg viewBox="0 0 24 20" className="h-5 w-6"><path d="M0 7 12 .5 24 7v12.500H0z" fill="#fff" /><path d="M1.500 7.500h21L12.500 11.500l4.500 4z" fill="#2d2726" /></svg>
      </Cell>
      <Cell active><Chrome className="h-6 w-6" /></Cell>
      <Cell>
        <svg viewBox="0 0 24 24" className="h-6 w-6">
          <path d="M1 8.200 2.500 7 18 18.500V24L1 9.600z" fill="#1486c8" />
          <path d="M1 15.800 2.500 17 18 5.500V0L1 14.400z" fill="#1a7ebd" />
          <path d="M17.500 0 24 3v18l-6.500 3q-.8 0-1-.5l1.500-1V1.500l-1.500-1q.4-.5 1-.5z" fill="#2aa9f0" />
        </svg>
      </Cell>
      <Cell>
        <svg viewBox="0 0 22 22" className="h-[22px] w-[22px]"><path d="M3.500 15h15l2.800 6.500H.7z" fill="#f57c0a" /><path d="M10 .8Q11 0 12 .8L17 16q-6 4-12 0z" fill="#f58a14" /><path d="M8.800 4.800h4.400l1.300 4H7.500zM6.400 12h9.200l1.200 3.800Q11 19 5.200 15.800z" fill="#f5f5f5" /></svg>
      </Cell>
      <Cell>
        <FaWhatsapp className="h-[27px] w-[27px] text-[#25d366]" />
        <span className="absolute left-[27px] top-[18px] flex h-[19px] w-[19px] items-center justify-center rounded-full border border-[#aaa] bg-[#383433] text-[10.500px] font-semibold leading-none">18</span>
      </Cell>
      <Cell>
        <svg viewBox="0 0 24 24" className="h-6 w-6">
          <defs><linearGradient id="clap" x1="0" y1="0" x2=".5" y2="1"><stop stopColor="#d394f4" /><stop offset="1" stopColor="#5540e8" /></linearGradient></defs>
          <path d="M0 4 21 .3q1.500-.3 1.800 1l.3 3L1 9z" fill="#8a4ed0" /><rect y="7.500" width="24" height="16.500" rx="1.500" fill="url(#clap)" /><path d="M0 8h12v5H0z" fill="#e29cf5" /><path d="M12 8h12v5H12z" fill="#a376ee" />
        </svg>
      </Cell>
      <Cell running>
        <svg viewBox="0 0 22 22" className="h-[22px] w-[22px]"><path d="M.6.6h20.800v20.800H.6z" fill="none" stroke="#fff" strokeWidth="1.200" /><path d="M.6 15 8 5.500l6.500 8L16.500 9l4.900 6v6.500H.6z" fill="#fff" /></svg>
      </Cell>
      <svg viewBox="0 0 24 16" className="ml-[53px] h-4 w-6" fill="none" stroke="#fff" strokeWidth="1.500"><path d="M20.500 3v10.500q0 1.500-1.500 1.500H3Q.8 15 .8 13V.8h19.700V4M20.500 3.500h2.700V13q0 2-2 2h-3M14.500 5h3.500M14.500 8h3.500M4 11.500h14" /><path d="M4 4.500h7v4H4z" /></svg>
      <span className="ml-[8px] w-[38px] whitespace-nowrap text-[14px] tracking-[-0.450px]">30°C</span>
      <span className="w-[95px] whitespace-nowrap text-[14px] tracking-[-0.520px]">Partly sunny</span>
      <svg viewBox="0 0 12 8" className="ml-[4px] h-2 w-3" fill="none" stroke="#fff" strokeWidth="1.200"><path d="m.5 7 5.500-5.500L11.500 7" /></svg>
      <svg viewBox="0 0 18 16" className="ml-[9px] h-4 w-[18px]"><path d="M3 11.500a3 3 0 0 1 0-6A4.500 4.500 0 0 1 12 4.500q3 1 3 4v3z" fill="#c9c9c9" /><circle cx="12.500" cy="10.500" r="4.800" fill="#777" /><path d="M11.200 8.500v4M13.800 8.500v4" stroke="#fff" /></svg>
      <svg viewBox="0 0 16 12" className="ml-[6px] h-3 w-4" fill="none" stroke="#fff"><path d="M5 3.500h9.500v6.500H4M15.500 5v3.500" /><path d="M7 5h6v3.500H7z" fill="#fff" /><path d="M1.500 0v2M4.500 0v2M.5 2.500h5v2L3 6.500.5 4.500zM3 6v5" /></svg>
      <svg viewBox="0 0 14 12" className="ml-[10px] h-3 w-[14px]"><path d="M0 10h2v2H0zM3 8h2v4H3zM6 6h2v6H6zM9 3.500h2V12H9z" fill="#fff" /><path d="M12 0h2v12h-2z" fill="#777" /></svg>
      <svg viewBox="0 0 16 14" className="ml-[9px] h-[14px] w-4" fill="none" stroke="#fff" strokeWidth="1.100"><path d="M.6 4.800h2.400L6.500 1.500v11L3 9.200H.6zM8.500 5q1.500 2 0 4M10.700 3.200q3 3.800 0 7.600M13 1.500q4.500 5.500 0 11" /></svg>
      <div className="ml-[8px] w-[26px] text-center text-[11.500px] leading-[17px] tracking-[-0.300px]"><div>ENG</div><div>US</div></div>
      <div className="ml-[8px] w-[57px] whitespace-nowrap text-center text-[12px] leading-[18px] tracking-[-0.380px]"><div>2:35 AM</div><div>9/18/2024</div></div>
      <div className="relative ml-[16px] h-10 w-[26px]">
        <svg viewBox="0 0 16 16" className="absolute left-px top-[12px] h-4 w-4"><path d="M0 0h16v13H7l-3 3v-3H0z" fill="#fff" /><path d="M3 3.500h10M3 6.500h10M3 9.500h7" stroke="#2e2623" /></svg>
        <span className="absolute left-[7px] top-[18px] flex h-[19px] w-[19px] items-center justify-center rounded-full border border-[#999] bg-[#4b4643] text-[10.500px] font-semibold leading-none">14</span>
      </div>
      <span className="ml-[11px] h-10 w-px bg-[#8a8079]" />
    </div>
  );
}

export default function App() {
  return (
    <div className="relative flex h-[768px] w-[1366px] flex-col overflow-hidden bg-[#f8f9fb]">
      <BrowserChrome />
      <WebPage />
      <OpenDialog />
      <div className="absolute left-[1073px] top-[650px] whitespace-nowrap font-['Open_Sans',sans-serif] text-[#b5b7b9]">
        <div className="text-[19.500px] leading-[24px] tracking-[-0.200px]">Activate Windows</div>
        <div className="text-[15px] leading-[20px] tracking-[-0.250px]">Go to Settings to activate Windows.</div>
      </div>
      <Taskbar />
    </div>
  );
}
